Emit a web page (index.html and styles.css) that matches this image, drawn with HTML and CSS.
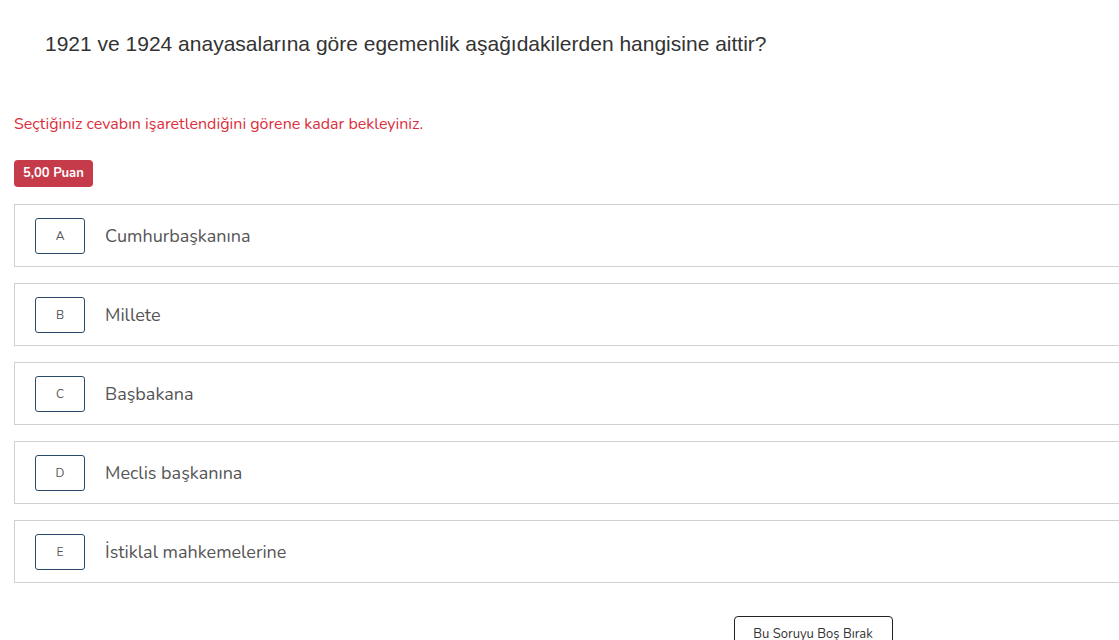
FILE: index.html
```html
<!DOCTYPE html>
<html lang="tr">
<head>
<meta charset="utf-8">
<link rel="stylesheet" href="styles.css">
</head>
<body>
<main class="page">
  <h1 class="question">1921 ve 1924 anayasalarına göre egemenlik aşağıdakilerden hangisine aittir?</h1>
  <p class="notice">Seçtiğiniz cevabın işaretlendiğini görene kadar bekleyiniz.</p>
  <span class="badge">5,00 Puan</span>
  <ul class="options">
    <li class="option"><span class="letter">A</span><span class="text">Cumhurbaşkanına</span></li>
    <li class="option"><span class="letter">B</span><span class="text">Millete</span></li>
    <li class="option"><span class="letter">C</span><span class="text">Başbakana</span></li>
    <li class="option"><span class="letter">D</span><span class="text">Meclis başkanına</span></li>
    <li class="option"><span class="letter">E</span><span class="text">İstiklal mahkemelerine</span></li>
  </ul>
  <div class="actions"><button class="skip">Bu Soruyu Boş Bırak</button></div>
</main>
</body>
</html>
```
FILE: styles.css
```css
html, body {
  margin: 0;
  padding: 0;
  overflow: hidden;
  background: #fff;
}
.page {
  width: 1598px;
  padding: 0 14px;
  font-family: "Nunito", "Lato", "Open Sans", sans-serif;
}
.question {
  margin: 0;
  padding: 31px 0 0 31px;
  font-family: "Liberation Sans", Arial, sans-serif;
  font-weight: 400;
  font-size: 21px;
  line-height: 25px;
  color: #333;
}
.notice {
  margin: 58px 0 0;
  font-size: 16px;
  line-height: 20px;
  color: #dc2f3c;
}
.badge {
  display: block;
  width: fit-content;
  margin-top: 26px;
  height: 27px;
  line-height: 27px;
  padding: 0 9px;
  background: #c53b4a;
  color: #fff;
  font-weight: 700;
  font-size: 13px;
  border-radius: 4px;
}
.options {
  list-style: none;
  margin: 17px 0 0;
  padding: 0;
  display: flex;
  flex-direction: column;
  gap: 16px;
}
.option {
  display: flex;
  align-items: center;
  height: 61px;
  border: 1px solid #d0d0d0;
  padding: 0 20px;
}
.letter {
  display: flex;
  align-items: center;
  justify-content: center;
  width: 48px;
  height: 34px;
  border: 1px solid #2a4a6a;
  border-radius: 3px;
  font-size: 12px;
  color: #555;
}
.text {
  margin-left: 20px;
  font-size: 18px;
  color: #555;
}
.actions {
  display: flex;
  justify-content: center;
  margin-top: 33px;
}
.skip {
  width: 159px;
  height: 34px;
  background: #fff;
  border: 1px solid #222;
  border-radius: 4px;
  font-family: "Nunito", "Lato", "Open Sans", sans-serif;
  font-size: 13px;
  color: #333;
  padding: 8px 0 0;
  display: flex;
  justify-content: center;
  align-items: flex-start;
}
```
